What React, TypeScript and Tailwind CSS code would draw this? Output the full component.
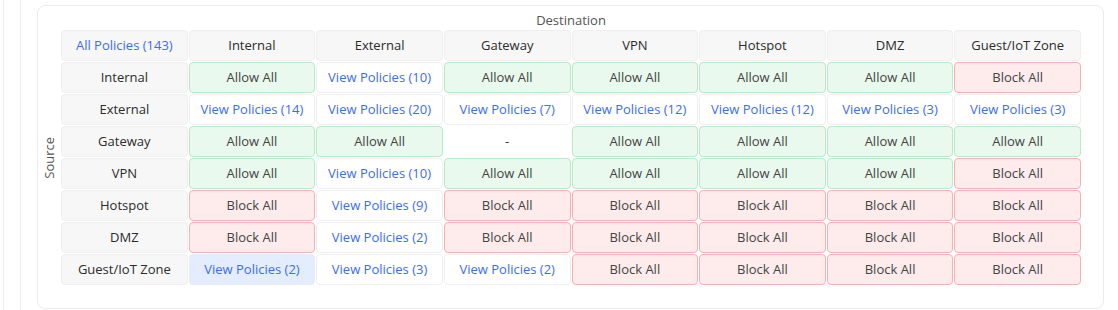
import React from "react";

type Kind = "allow" | "block" | "view" | "none" | "active";

interface Cell {
  kind: Kind;
  count?: number;
}

const zones = ["Internal", "External", "Gateway", "VPN", "Hotspot", "DMZ", "Guest/IoT Zone"];

const A: Cell = { kind: "allow" };
const B: Cell = { kind: "block" };
const v = (count: number, active = false): Cell => ({ kind: active ? "active" : "view", count });

const matrix: Cell[][] = [
  [A, v(10), A, A, A, A, B],
  [v(14), v(20), v(7), v(12), v(12), v(3), v(3)],
  [A, A, { kind: "none" }, A, A, A, A],
  [A, v(10), A, A, A, A, B],
  [B, v(9), B, B, B, B, B],
  [B, v(2), B, B, B, B, B],
  [v(2, true), v(3), v(2), B, B, B, B],
];

const cellStyles: Record<Kind, string> = {
  allow: "bg-[#e9f9ed] border-[#b8eac6] text-[#444]",
  block: "bg-[#feebec] border-[#f7b1b5] text-[#444]",
  view: "bg-white border-[#efefef] text-[#3c6cf4]",
  active: "bg-[#e3edfe] border-[#e3edfe] text-[#3c6cf4]",
  none: "bg-white border-white text-[#333]",
};

const PolicyCell = ({ cell }: { cell: Cell }) => {
  const label =
    cell.kind === "allow"
      ? "Allow All"
      : cell.kind === "block"
      ? "Block All"
      : cell.kind === "none"
      ? "-"
      : `View Policies (${cell.count})`;

  return (
    <div
      className={`flex h-[31px] items-center justify-center rounded-[4px] border pt-px ${cellStyles[cell.kind]}`}
    >
      {label}
    </div>
  );
};

const HeaderCell = ({ children, blue }: { children: React.ReactNode; blue?: boolean }) => (
  <div
    className={`flex h-[31px] items-center justify-center rounded-[4px] border border-[#efefef] bg-[#f7f7f7] pt-px ${
      blue ? "text-[#3c6cf4]" : "text-[#2b2b2b]"
    }`}
  >
    {children}
  </div>
);

const App = () => {
  return (
    <div
      className="h-[310px] w-[1118px] overflow-hidden bg-white pl-[3px] text-[13px]"
      style={{ fontFamily: '"Open Sans", "Liberation Sans", sans-serif' }}
    >
      <div className="h-full border-l border-[#ececec] pl-4">
        <div className="h-full border-l border-[#ececec] pl-4 pt-[5px]">
          <div className="h-[304px] w-[1067px] rounded-lg border border-[#ececec] pr-[22px] pt-1">
            <div className="pl-[23px] text-center leading-5 text-[#555]">Destination</div>

            <div className="flex">
              {/* Source label runs down the side of the grid */}
              <div className="flex w-[23px] items-center justify-center">
                <span className="-rotate-90 whitespace-nowrap text-[#555]">Source</span>
              </div>

              <div className="grid flex-1 grid-cols-8 gap-px">
                <HeaderCell blue>All Policies (143)</HeaderCell>
                {zones.map((z) => (
                  <HeaderCell key={z}>{z}</HeaderCell>
                ))}

                {matrix.map((row, i) => (
                  <React.Fragment key={zones[i]}>
                    <HeaderCell>{zones[i]}</HeaderCell>
                    {row.map((cell, j) => (
                      <PolicyCell key={j} cell={cell} />
                    ))}
                  </React.Fragment>
                ))}
              </div>
            </div>
          </div>
        </div>
      </div>
    </div>
  );
};

export default App;
